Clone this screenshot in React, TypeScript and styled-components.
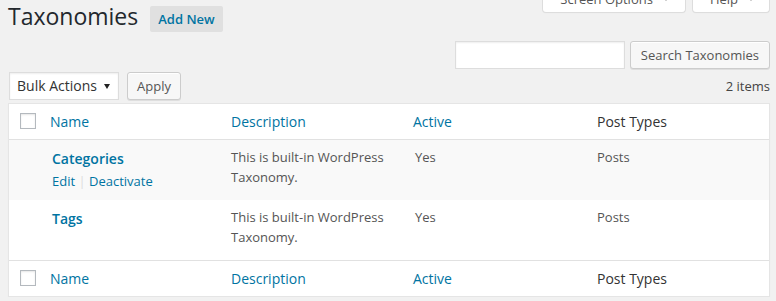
import React from "react";
import styled, { createGlobalStyle } from "styled-components";

const GlobalStyle = createGlobalStyle`
  html, body {
    margin: 0;
    padding: 0;
    background: #f1f1f1;
  }
  body {
    font-family: "Open Sans", "Liberation Sans", sans-serif;
    font-size: 13px;
    line-height: 1.4em;
    color: #444;
    overflow: hidden;
  }
  * { box-sizing: border-box; }
`;

const Page = styled.div`
  padding: 0 6px 0 8px;
`;

const HeaderRow = styled.div`
  display: flex;
  align-items: flex-start;
  height: 32px;
`;

const Title = styled.h2`
  margin: 2px 0 0;
  font-size: 23px;
  font-weight: 400;
  line-height: 29px;
  color: #23282d;
`;

const AddNew = styled.a`
  display: block;
  margin: 6px 0 0 12px;
  padding: 4px 8px;
  line-height: 18px;
  font-size: 13px;
  font-weight: 600;
  color: #0074a2;
  background: #e0e0e0;
  border-radius: 2px;
  text-decoration: none;
`;

const ScreenTabs = styled.div`
  margin: -15px 0 0 auto;
  display: flex;
  gap: 6px;
`;

const Tab = styled.div<{ $right: number }>`
  display: flex;
  align-items: center;
  gap: 10px;
  padding: 5px ${(p) => p.$right}px 4px 17px;
  line-height: 18px;
  font-size: 13px;
  color: #555;
  background: #fff;
  border: 1px solid #ddd;
  border-top: none;
  border-radius: 0 0 4px 4px;
  box-shadow: 0 1px 1px -1px rgba(0, 0, 0, 0.1);
`;

const SearchRow = styled.div`
  display: flex;
  justify-content: flex-end;
  gap: 5px;
  margin-top: 9px;
`;

const SearchInput = styled.div`
  width: 170px;
  height: 28px;
  background: #fff;
  border: 1px solid #ddd;
  box-shadow: inset 0 1px 2px rgba(0, 0, 0, 0.07);
`;

const Button = styled.div`
  height: 28px;
  padding: 0 10px 1px;
  line-height: 26px;
  font-size: 13px;
  color: #555;
  background: #f7f7f7;
  border: 1px solid #ccc;
  border-radius: 3px;
  box-shadow: inset 0 1px 0 #fff, 0 1px 0 rgba(0, 0, 0, 0.08);
  white-space: nowrap;
`;

const TableNav = styled.div`
  display: flex;
  align-items: center;
  height: 28px;
  margin: 3px 0 3px;
`;

const SelectBox = styled.div`
  display: flex;
  align-items: center;
  justify-content: space-between;
  width: 110px;
  height: 28px;
  margin-left: 1px;
  padding: 0 8px 0 7px;
  font-size: 14px;
  color: #333;
  background: #fff;
  border: 1px solid #ddd;
  box-shadow: inset 0 1px 2px rgba(0, 0, 0, 0.07);
`;

const ApplyButton = styled(Button)`
  margin-left: 8px;
  padding: 0 9px 1px;
`;

const Count = styled.div`
  margin-left: auto;
  font-size: 13px;
  color: #444;
`;

const Table = styled.div`
  background: #fff;
  border: 1px solid #e5e5e5;
  box-shadow: 0 1px 1px rgba(0, 0, 0, 0.04);
`;

const Row = styled.div<{ $alt?: boolean; $edge?: "top" | "bottom" }>`
  display: grid;
  grid-template-columns: 31px 181px 182px 184px 1fr;
  background: ${(p) => (p.$alt ? "#f9f9f9" : "#fff")};
  border-bottom: ${(p) => (p.$edge === "top" ? "1px solid #e1e1e1" : "none")};
  border-top: ${(p) => (p.$edge === "bottom" ? "1px solid #e1e1e1" : "none")};
`;

const HeadCell = styled.div<{ $link?: boolean }>`
  padding: 8px 10px;
  height: 35px;
  font-size: 14px;
  line-height: 19px;
  color: ${(p) => (p.$link ? "#0074a2" : "#333")};
`;

const CheckCell = styled.div`
  padding: 9px 0 0 11px;
`;

const Checkbox = styled.div`
  width: 16px;
  height: 16px;
  background: #fff;
  border: 1px solid #b4b9be;
  box-shadow: inset 0 1px 2px rgba(0, 0, 0, 0.1);
`;

const Cell = styled.div<{ $pl?: number }>`
  padding: 8px 10px 8px ${(p) => p.$pl ?? 10}px;
  font-size: 13px;
  line-height: 19.5px;
  color: #555;
`;

const RowTitle = styled.a`
  display: block;
  font-size: 14px;
  font-weight: 600;
  line-height: 21px;
  color: #0074a2;
  text-decoration: none;
`;

const RowActions = styled.div<{ $hidden?: boolean }>`
  padding-top: 2px;
  line-height: 21px;
  font-size: 13px;
  visibility: ${(p) => (p.$hidden ? "hidden" : "visible")};
`;

const ActionLink = styled.a`
  color: #0074a2;
  text-decoration: none;
`;

const Sep = styled.span`
  color: #ddd;
`;

const Arrow = ({ color, w, h }: { color: string; w: number; h: number }) => (
  <svg width={w} height={h} viewBox={`0 0 ${w} ${h}`} style={{ display: "block" }}>
    <polygon points={`0,0 ${w},0 ${w / 2},${h}`} fill={color} />
  </svg>
);

const HeadRow = ({ edge }: { edge: "top" | "bottom" }) => (
  <Row $edge={edge}>
    <CheckCell>
      <Checkbox />
    </CheckCell>
    <HeadCell $link>Name</HeadCell>
    <HeadCell $link>Description</HeadCell>
    <HeadCell $link>Active</HeadCell>
    <HeadCell>Post Types</HeadCell>
  </Row>
);

const rows = [
  { name: "Categories", alt: true, actions: true },
  { name: "Tags", alt: false, actions: false },
];

export default function App() {
  return (
    <Page>
      <GlobalStyle />
      <HeaderRow>
        <Title>Taxonomies</Title>
        <AddNew>Add New</AddNew>
        <ScreenTabs>
          <Tab $right={16}>
            <span>Screen Options</span>
            <Arrow color="#888" w={6} h={4} />
          </Tab>
          <Tab $right={15}>
            <span>Help</span>
            <Arrow color="#888" w={6} h={4} />
          </Tab>
        </ScreenTabs>
      </HeaderRow>
      <SearchRow>
        <SearchInput />
        <Button>Search Taxonomies</Button>
      </SearchRow>
      <TableNav>
        <SelectBox>
          <span>Bulk Actions</span>
          <Arrow color="#222" w={6} h={5} />
        </SelectBox>
        <ApplyButton>Apply</ApplyButton>
        <Count>2 items</Count>
      </TableNav>
      <Table>
        <HeadRow edge="top" />
        {rows.map((r) => (
          <Row key={r.name} $alt={r.alt}>
            <div />
            <Cell $pl={12}>
              <RowTitle>{r.name}</RowTitle>
              <RowActions $hidden={!r.actions}>
                <ActionLink>Edit</ActionLink>
                <Sep> | </Sep>
                <ActionLink>Deactivate</ActionLink>
              </RowActions>
            </Cell>
            <Cell>This is built-in WordPress Taxonomy.</Cell>
            <Cell $pl={12}>Yes</Cell>
            <Cell>Posts</Cell>
          </Row>
        ))}
        <HeadRow edge="bottom" />
      </Table>
    </Page>
  );
}
